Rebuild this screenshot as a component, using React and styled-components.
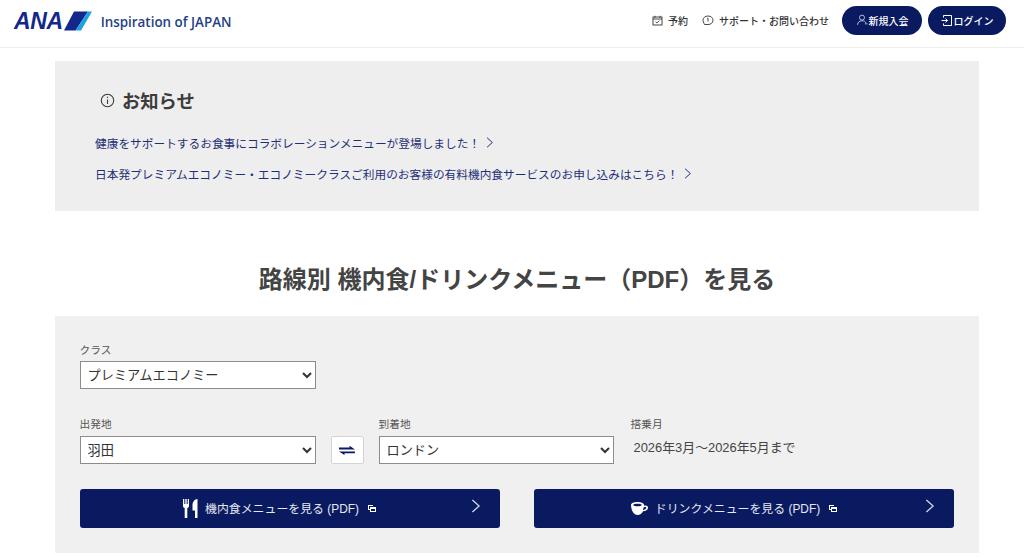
import React from 'react';
import styled, { createGlobalStyle } from 'styled-components';

const GlobalStyle = createGlobalStyle`
  html, body {
    margin: 0;
    background: #fff;
    color: #333;
    font-family: "Liberation Sans", "Noto Sans CJK JP", sans-serif;
  }
  * { box-sizing: border-box; }
`;

const Page = styled.div`
  width: 1024px;
  height: 558px;
  overflow: hidden;
`;

const Header = styled.header`
  height: 48px;
  border-bottom: 1px solid #ededed;
  display: flex;
  align-items: center;
  justify-content: space-between;
  padding: 0 18px 7px 14px;
`;

const Brand = styled.a`
  display: flex;
  align-items: center;
  margin-top: 1px;
`;

const LogoWord = styled.span`
  font-family: "Liberation Sans", sans-serif;
  font-size: 23px;
  line-height: 20px;
  font-weight: 700;
  font-style: italic;
  letter-spacing: -0.4px;
  color: #12288a;
`;

const Tagline = styled.span`
  margin: 2px 0 0 9px;
  font-family: "Open Sans", sans-serif;
  font-size: 13.4px;
  font-weight: 600;
  color: #1f4286;
`;

const Nav = styled.nav`
  display: flex;
  align-items: center;
`;

const NavLink = styled.a`
  display: flex;
  align-items: center;
  gap: 5px;
  margin-right: ${(p) => p.$gap}px;
  font-size: 10px;
  font-weight: 500;
  color: #333;
`;

const NavButton = styled.a`
  display: flex;
  align-items: center;
  justify-content: center;
  gap: 1px;
  width: ${(p) => p.$width}px;
  height: 29px;
  margin-left: ${(p) => p.$left}px;
  border-radius: 15px;
  background: #0a1a60;
  color: #fff;
  font-size: 10px;
  font-weight: 500;
`;

const Main = styled.main`
  padding: 13px 45px 0 55px;
`;

const Notice = styled.section`
  height: 150px;
  background: #eeeeee;
  padding: 27px 40px 0;
`;

const NoticeTitle = styled.h2`
  display: flex;
  align-items: center;
  gap: 7px;
  margin: 0 0 21px;
  padding-left: 5px;
  height: 24px;
  font-size: 18.3px;
  font-weight: 700;
  color: #3c3c3c;
`;

const NoticeLink = styled.a`
  display: flex;
  align-items: center;
  gap: 6px;
  height: 18px;
  margin-bottom: 13px;
  font-size: 11.7px;
  color: #1f2e78;
`;

const Heading = styled.h1`
  margin: 53px 0 20px;
  height: 32px;
  line-height: 32px;
  text-align: center;
  font-size: 24px;
  font-weight: 700;
  color: #444;
`;

const Panel = styled.section`
  height: 237px;
  background: #f0f0f0;
  padding: 27px 25px 0 24.5px;
`;

const FieldLabel = styled.label`
  display: block;
  height: ${(p) => p.$height || 18}px;
  font-size: 10.7px;
  line-height: 15px;
  color: #555;
`;

const Select = styled.select`
  display: block;
  width: ${(p) => p.$width}px;
  height: 28px;
  padding: 0 3px;
  background: #fff;
  border: 1px solid #8c8c8c;
  border-radius: 0;
  font-family: inherit;
  font-size: 13.2px;
  color: #333;
`;

const Row = styled.div`
  display: flex;
  align-items: flex-end;
  margin-top: 28px;
`;

const Field = styled.div`
  width: ${(p) => p.$width}px;
  margin-right: ${(p) => p.$right || 0}px;
`;

const SwapButton = styled.button`
  display: flex;
  align-items: center;
  justify-content: center;
  width: 33px;
  height: 28px;
  margin: 0 15px;
  padding: 0;
  background: #fff;
  border: 1px solid #d4d4d4;
  border-radius: 2px;
`;

const Period = styled.div`
  height: 24px;
  margin: 0 0 4px 3px;
  font-size: 12.9px;
  line-height: 24px;
  color: #444;
`;

const Actions = styled.div`
  display: flex;
  justify-content: space-between;
  margin: 25px 0 0;
  width: 874.5px;
`;

const ActionButton = styled.a`
  position: relative;
  display: flex;
  align-items: center;
  justify-content: center;
  gap: 7px;
  width: ${(p) => p.$width}px;
  height: 39px;
  padding: 0 20px 2px 0;
  background: #0a1a60;
  border-radius: 3px;
  color: #e6e8f0;
  font-size: 11.9px;
`;

const ChevronSlot = styled.span`
  position: absolute;
  right: 19px;
  top: 10px;
  display: flex;
`;

const Chevron = ({ size = 11, color = '#1f2e78' }) => (
  <svg width={size * 0.7} height={size} viewBox="0 0 7 10" fill="none">
    <path d="M1 .7 5.800 5 1 9.300" stroke={color} strokeWidth="0.9" />
  </svg>
);

const External = () => (
  <svg width="8" height="7" viewBox="0 0 8 7" style={{ marginLeft: 2, marginTop: 2 }} shapeRendering="crispEdges">
    <path d="M0 0h5v1H1v3h1v1H0z" fill="#fff" />
    <path d="M2 2h6v5H2zM3 4v2h4V4z" fill="#fff" fillRule="evenodd" />
  </svg>
);

export default function App() {
  return (
    <Page>
      <GlobalStyle />
      <Header>
        <Brand>
          <LogoWord>ANA</LogoWord>
          <svg width="28" height="20" viewBox="0 0 28 20" style={{ marginLeft: 1 }}>
            <path d="M10 .5h14L11.500 19.500H0z" fill="#12288a" />
            <path d="M24 .5h4L17 19.500h-5.500z" fill="#1aa3e0" />
          </svg>
          <Tagline>Inspiration of JAPAN</Tagline>
        </Brand>
        <Nav>
          <NavLink $gap={14}>
            <svg width="11" height="11" viewBox="0 0 11 11" fill="none" stroke="#333" strokeWidth="0.9">
              <rect x="1" y="2" width="9" height="8" />
              <path d="M1 4h9M3 .8v2M8 .8v2M3.600 6.800l1.300 1.200 2.400-2.400" />
            </svg>
            予約
          </NavLink>
          <NavLink $gap={0}>
            <svg width="12" height="11" viewBox="0 0 12 11" fill="none" stroke="#333" strokeWidth="0.9">
              <path d="M6 1c2.900 0 5 1.800 5 4.300S8.900 9.500 6 9.500H2.500l-.4-1C1.400 7.600 1 6.500 1 5.300 1 2.800 3.100 1 6 1z" />
              <path d="M5.300 3.400 6 3v3.500" />
            </svg>
            サポート・お問い合わせ
          </NavLink>
          <NavButton $width={80} $left={13}>
            <svg width="12" height="12" viewBox="0 0 12 12" fill="none" stroke="#c8cde6" strokeWidth="0.9">
              <circle cx="6" cy="3.600" r="2.500" />
              <path d="M1.500 10.800c.4-2.800 2-4 4.500-4s3.200.7 3.900 2M8.800 9.800h2.600" />
            </svg>
            新規入会
          </NavButton>
          <NavButton $width={78} $left={6}>
            <svg width="12" height="13" viewBox="0 0 12 13" fill="none" stroke="#fff" strokeWidth="1">
              <path d="M2.500 3.500V1.500h8v10h-8V9.500M.5 6.500h6M4.500 4.500l2 2-2 2" />
            </svg>
            ログイン
          </NavButton>
        </Nav>
      </Header>
      <Main>
        <Notice>
          <NoticeTitle>
            <svg width="15" height="15" viewBox="0 0 15 15" fill="none" stroke="#3c3c3c" strokeWidth="1.100">
              <circle cx="7.500" cy="7.500" r="6.200" />
              <path d="M7.500 6.500v4.500M7.500 3.800v1.300" />
            </svg>
            お知らせ
          </NoticeTitle>
          <NoticeLink>
            健康をサポートするお食事にコラボレーションメニューが登場しました！
            <Chevron />
          </NoticeLink>
          <NoticeLink>
            日本発プレミアムエコノミー・エコノミークラスご利用のお客様の有料機内食サービスのお申し込みはこちら！
            <Chevron />
          </NoticeLink>
        </Notice>
        <Heading>路線別 機内食/ドリンクメニュー（PDF）を見る</Heading>
        <Panel>
          <Field $width={236}>
            <FieldLabel>クラス</FieldLabel>
            <Select $width={236} defaultValue="premium">
              <option value="premium">プレミアムエコノミー</option>
            </Select>
          </Field>
          <Row>
            <Field $width={236}>
              <FieldLabel $height={19}>出発地</FieldLabel>
              <Select $width={236} defaultValue="hnd">
                <option value="hnd">羽田</option>
              </Select>
            </Field>
            <SwapButton aria-label="入れ替え">
              <svg width="16" height="11" viewBox="0 0 16 11" fill="#0a1a60">
                <path d="M0 2.600h10.500V.8L16 4.400H0z" />
                <path d="M16 6.400v1.800H5.500V10L0 6.400z" />
              </svg>
            </SwapButton>
            <Field $width={235} $right={17}>
              <FieldLabel $height={19}>到着地</FieldLabel>
              <Select $width={235} defaultValue="lhr">
                <option value="lhr">ロンドン</option>
              </Select>
            </Field>
            <Field $width={220}>
              <FieldLabel $height={19}>搭乗月</FieldLabel>
              <Period>2026年3月〜2026年5月まで</Period>
            </Field>
          </Row>
          <Actions>
            <ActionButton $width={420}>
              <svg width="15" height="19" viewBox="0 0 15 19" fill="#fff" style={{ marginTop: 2 }}>
                <path d="M0 0h1.300v5h1V0h1.400v5h1V0H6v7c0 1-.7 1.700-1.700 2v10H1.700V9C.7 8.700 0 8 0 7z" />
                <path d="M14.500 0v19H12v-7.500H9.500V6c0-3 2.300-6 5-6z" />
              </svg>
              機内食メニューを見る (PDF)
              <External />
              <ChevronSlot>
                <Chevron size={14} color="#d8dbe8" />
              </ChevronSlot>
            </ActionButton>
            <ActionButton $width={420}>
              <svg width="17" height="13" viewBox="0 0 17 13" fill="#fff" style={{ marginTop: 2 }}>
                <path
                  fillRule="evenodd"
                  d="M0 3c0-2 3-3 6.500-3S13 1 13 3c0 0 0 .4-.1.8 2.300-.7 4.100.2 4.100 2 0 2-2 3.300-5 3.500C11 11.500 9 13 6.500 13 2.800 13 0 8 0 3zm2 0c.6.8 2.400 1.300 4.500 1.300S10.400 3.800 11 3c-.6-.8-2.400-1.300-4.500-1.300S2.600 2.200 2 3zm10.600 2.400c-.2 1-.4 1.700-.6 2.500 1.900-.2 3.300-1 3.300-2.100 0-.7-1.200-.9-2.700-.4z"
                />
              </svg>
              ドリンクメニューを見る (PDF)
              <External />
              <ChevronSlot>
                <Chevron size={14} color="#d8dbe8" />
              </ChevronSlot>
            </ActionButton>
          </Actions>
        </Panel>
      </Main>
    </Page>
  );
}
